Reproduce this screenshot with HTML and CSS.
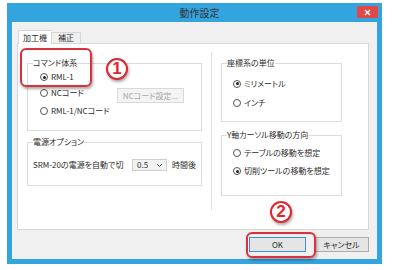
FILE: index.html
```html
<!DOCTYPE html>
<html lang="ja">
<head>
<meta charset="utf-8">
<title>動作設定</title>
<link rel="stylesheet" href="styles.css">
</head>
<body>
<div class="window">
  <div class="titlebar">
    <span class="title">動作設定</span>
    <span class="close"><svg width="7" height="7" viewBox="0 0 7 7"><path d="M1 1L6 6M6 1L1 6" stroke="#fff" stroke-width="1.4"/></svg></span>
  </div>
  <div class="client">
    <div class="tabs">
      <span class="tab active">加工機</span>
      <span class="tab">補正</span>
    </div>
    <div class="panel">
      <div class="col left">
        <fieldset class="group g-cmd">
          <legend>コマンド体系</legend>
          <div class="row r1"><span class="radio on"></span>RML-1</div>
          <div class="row r2"><span class="radio"></span><span class="lbl-nc">NCコード</span><span class="btn disabled">NCコード設定...</span></div>
          <div class="row r3"><span class="radio"></span>RML-1/NCコード</div>
        </fieldset>
        <fieldset class="group g-power">
          <legend>電源オプション</legend>
          <div class="row power">
            <span class="power-text">SRM-20の電源を自動で切</span>
            <span class="select">0.5<svg width="7" height="5" viewBox="0 0 7 5"><path d="M1 1L3.5 3.5L6 1" fill="none" stroke="#555" stroke-width="1"/></svg></span>
            <span>時間後</span>
          </div>
        </fieldset>
      </div>
      <div class="divider"></div>
      <div class="col right">
        <fieldset class="group g-unit">
          <legend>座標系の単位</legend>
          <div class="row rr"><span class="radio on"></span>ミリメートル</div>
          <div class="row rr"><span class="radio"></span>インチ</div>
        </fieldset>
        <fieldset class="group g-y">
          <legend>Y軸カーソル移動の方向</legend>
          <div class="row ry"><span class="radio"></span>テーブルの移動を想定</div>
          <div class="row ry"><span class="radio on"></span>切削ツールの移動を想定</div>
        </fieldset>
      </div>
    </div>
    <div class="buttons">
      <span class="btn default">OK</span>
      <span class="btn">キャンセル</span>
    </div>
  </div>
</div>
<div class="mark mark-1"></div>
<div class="mark mark-2"></div>
<div class="num num-1">1</div>
<div class="num num-2">2</div>
</body>
</html>
```
FILE: styles.css
```css
* { box-sizing: border-box; }
html, body { margin: 0; padding: 0; background: #fff; }
body {
  font-family: "Noto Sans CJK JP", "Noto Sans", sans-serif;
  font-size: 8px;
  line-height: 10px;
  color: #2b2b2b;
  font-feature-settings: "palt";
  position: relative;
  width: 398px;
  height: 270px;
  overflow: hidden;
}
.window {
  margin: 3px 0 0 7px;
  width: 375px;
  height: 261px;
  background: #33a4dd;
  padding: 0 5px 5px 5px;
  display: flex;
  flex-direction: column;
}
.titlebar {
  height: 19px;
  display: flex;
  align-items: center;
  justify-content: center;
  position: relative;
}
.title { font-size: 10px; color: #333; margin-left: 10px; }
.close {
  position: absolute;
  right: -1px;
  top: 3px;
  width: 21px;
  height: 12px;
  background: #e0494a;
  display: flex;
  align-items: center;
  justify-content: center;
}
.close svg { display: block; }
.client {
  flex: 1;
  background: #f0f0f0;
  padding: 8px 8px 0 5px;
  display: flex;
  flex-direction: column;
}
.tabs {
  display: flex;
  align-items: flex-end;
  height: 13px;
  padding-left: 1px;
  position: relative;
  z-index: 1;
}
.tab {
  height: 11px;
  padding: 0 6px;
  border: 1px solid #d6d6d6;
  border-bottom: none;
  background: #f0f0f0;
  line-height: 10px;
  font-size: 8px;
}
.tab.active {
  height: 14px;
  margin-bottom: -1px;
  background: #fff;
  padding: 2px 4px 0;
  border-right: none;
}
.panel {
  height: 187px;
  background: #fff;
  border: 1px solid #d6d6d6;
  display: flex;
  padding: 14px 0 0 9px;
}
.col { display: flex; flex-direction: column; }
.left { width: 175px; }
.right { width: 121px; margin-left: 9px; }
.divider {
  width: 1px;
  background: #e2e2e2;
  margin: -6px 0 0 9px;
  height: 158px;
}
.group {
  margin: 0;
  border: 1px solid #dcdcdc;
  padding: 0 5px;
  min-width: 0;
}
.group legend {
  padding: 0;
  line-height: 10px;
  font-size: 8px;
}
.row { display: flex; align-items: center; white-space: nowrap; }
.radio {
  width: 8px;
  height: 8px;
  border: 1px solid #555;
  border-radius: 50%;
  background: #fff;
  margin-right: 3px;
  position: relative;
  flex: none;
}
.radio.on::after {
  content: "";
  position: absolute;
  left: 1.5px;
  top: 1.5px;
  width: 3px;
  height: 3px;
  border-radius: 50%;
  background: #222;
}
.g-cmd { padding-bottom: 10px; }
.g-cmd .row { padding-left: 7px; }
.r1 { height: 14px; margin-top: 2px; }
.r2 { height: 18px; align-items: center; }
.r3 { height: 18px; }
.lbl-nc { width: 66px; }
.btn {
  display: flex;
  align-items: center;
  justify-content: center;
  border: 1px solid #adadad;
  background: #e5e5e5;
  height: 15px;
}
.btn.disabled {
  align-self: flex-start;
  margin-top: 4px;
  width: 67px;
  background: #f4f4f4;
  border-color: #d9d9d9;
  color: #a6a6a6;
}
.g-power { margin-top: 6px; padding-bottom: 12px; }
.power { height: 16px; margin-top: 10px; }
.power-text { width: 99px; }
.select {
  width: 35px;
  height: 12px;
  border: 1px solid #cfcfcf;
  background: #f2f2f2;
  display: flex;
  align-items: center;
  justify-content: space-between;
  padding: 0 3px 0 4px;
  margin-right: 5px;
  color: #333;
}
.select svg { display: block; }
.g-unit { padding-bottom: 9px; }
.rr { height: 19px; padding-left: 6px; }
.rr:first-of-type { margin-top: 6px; }
.g-y { margin-top: 8px; padding-bottom: 15px; }
.ry { height: 18px; padding-left: 6px; }
.ry:first-of-type { margin-top: 4px; }
.buttons {
  display: flex;
  justify-content: flex-end;
  gap: 8px;
  margin-top: 7px;
  padding-right: 0;
}
.buttons .btn { width: 55px; }
.buttons .btn.default { width: 57px; border-color: #3d92d6; }
.mark {
  position: absolute;
  border: 2px solid #d8323f;
  border-radius: 6px;
  box-shadow: 1px 2px 3px rgba(0, 0, 0, 0.35), inset 0 0 1px rgba(0,0,0,0.2);
}
.mark-1 { left: 20px; top: 48px; width: 72px; height: 39px; }
.mark-2 { left: 246px; top: 232px; width: 70px; height: 26px; }
.num {
  position: absolute;
  width: 22px;
  height: 22px;
  border: 2px solid #e0262f;
  border-radius: 50%;
  background: #fff;
  color: #e0262f;
  font-family: "Liberation Sans", Arial, sans-serif;
  font-weight: bold;
  font-size: 17px;
  line-height: 18px;
  text-align: center;
  box-shadow: 1px 2px 3px rgba(0, 0, 0, 0.35);
}
.num-1 { left: 106px; top: 58px; }
.num-2 { left: 270px; top: 201px; }
```
